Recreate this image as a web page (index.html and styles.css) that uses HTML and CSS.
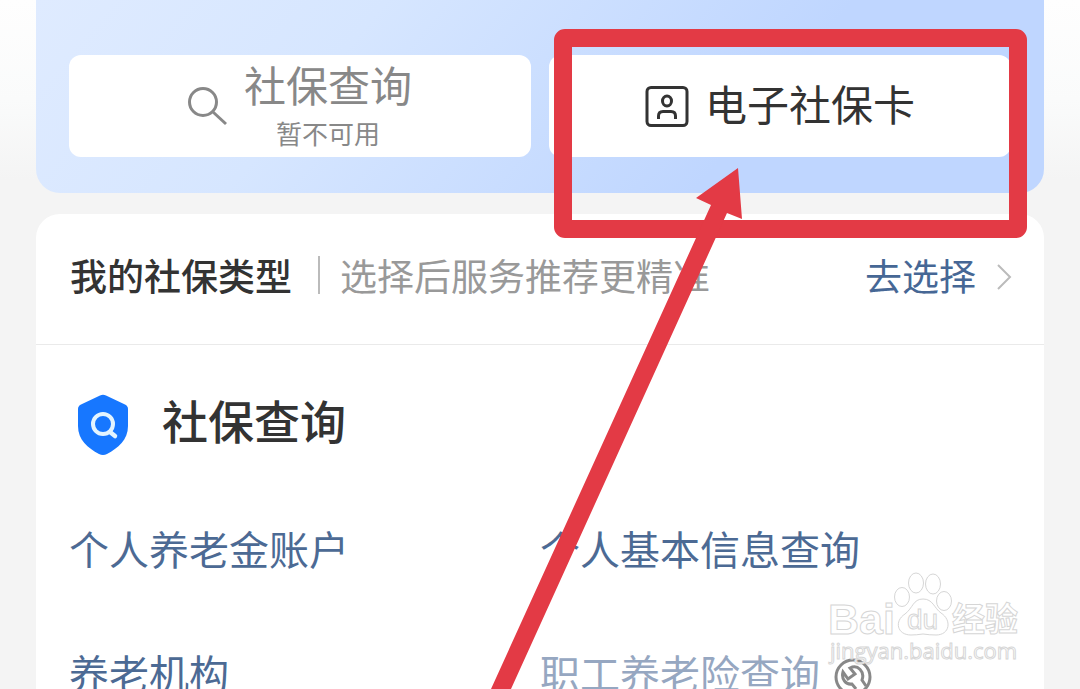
FILE: index.html
```html
<!DOCTYPE html>
<html lang="zh-CN">
<head>
    <meta charset="UTF-8">
    <meta name="viewport" content="width=device-width, initial-scale=1.0">
    <title>社保查询</title>
    <link rel="stylesheet" href="styles.css">
</head>
<body>
    <div class="page">
        <div class="hero">
            <button class="hero-btn disabled" type="button" disabled>
                <svg class="icon-search" viewBox="0 0 40 40" width="40" height="40">
                    <circle cx="15" cy="15" r="13.5"/>
                    <path d="M25 25L38 37"/>
                </svg>
                <span class="btn-text">
                    <span class="btn-title">社保查询</span>
                    <span class="btn-note">暂不可用</span>
                </span>
            </button>
            <button class="hero-btn" type="button">
                <svg class="icon-card" viewBox="0 0 44 42" width="44" height="42">
                    <rect x="2" y="1.5" width="40" height="38" rx="4"/>
                    <ellipse cx="22" cy="15" rx="4.5" ry="5"/>
                    <path d="M13.500 33V30Q13.500 25.500 18 25.500H26Q30.500 25.500 30.500 30V33"/>
                </svg>
                <span class="btn-title">电子社保卡</span>
            </button>
        </div>

        <div class="card">
            <div class="type-row">
                <strong class="type-title">我的社保类型</strong>
                <span class="type-tip">选择后服务推荐更精准</span>
                <a class="type-link" href="#">去选择
                    <svg viewBox="0 0 16 28" width="16" height="28"><path d="M2 2L14 14L2 26"/></svg>
                </a>
            </div>

            <div class="section-head">
                <svg viewBox="0 0 52 62" width="52" height="62">
                    <path fill="#1777ff" d="M23 1.500Q26 0 29 1.500L48 10.500Q51 12 51 15V32C51 46 41 54 30 60Q26 62 22 60C11 54 1 46 1 32V15Q1 12 4 10.500Z"/>
                    <circle cx="26" cy="30" r="10" fill="none" stroke="#e3f4ff" stroke-width="4"/>
                    <path d="M33 38L38 42" stroke="#e3f4ff" stroke-width="4.500" stroke-linecap="round"/>
                </svg>
                <h2>社保查询</h2>
            </div>

            <div class="links">
                <a href="#">个人养老金账户</a>
                <a href="#">个人基本信息查询</a>
                <a href="#">养老机构</a>
                <a class="muted" href="#">职工养老险查询
                    <svg viewBox="0 0 38 38" width="38" height="38">
                        <circle cx="19" cy="19" r="17"/>
                        <path d="M22 31L18 26C12 27 7 21 9 14L14 21L21 16L16 10C24 6 31 14 28 22L32 28"/>
                    </svg>
                </a>
            </div>
        </div>

        <svg class="watermark" viewBox="0 0 200 96" width="200" height="96">
            <text class="wm-brand" x="2" y="62">Bai</text>
            <ellipse cx="76" cy="25" rx="7.5" ry="9.5"/>
            <ellipse cx="90" cy="11" rx="7.5" ry="10"/>
            <ellipse cx="107" cy="12" rx="7.5" ry="10"/>
            <ellipse cx="118" cy="29" rx="7.5" ry="9.5"/>
            <path d="M97 27C107 27 108 36 115 41C126 48 124 63 110 63Q104 63 97 62Q90 63 85 63C71 63 68 49 79 42C87 36 87 27 97 27Z"/>
            <text class="wm-du" x="81" y="57">du</text>
            <text class="wm-cn" x="126" y="59">经验</text>
            <text class="wm-url" x="4" y="87">jingyan.baidu.com</text>
        </svg>

        <!-- highlight frame and arrow -->
        <svg class="marker" viewBox="0 0 1080 689">
            <rect x="563" y="38" width="455" height="191" rx="2"/>
            <path d="M738 168L696 198L711 205L491 689H511L727 213L742 219Z"/>
        </svg>
    </div>
</body>
</html>
```
FILE: styles.css
```css
* {
    box-sizing: border-box;
}
body {
    margin: 0;
    font-family: "Noto Sans CJK SC", sans-serif;
    color: #333;
    background: #f4f4f4;
}
.page {
    position: relative;
    height: 100vh;
    padding: 0 36px;
    overflow: hidden;
    background: linear-gradient(#fefefe, #fafbfb 100px, #f4f4f4 180px);
}
.hero {
    display: flex;
    gap: 18px;
    padding: 55px 33px 36px;
    border-radius: 0 0 24px 24px;
    background: linear-gradient(130deg, #dfebff, #d6e6ff 30%, #bfd6ff 70%, #bfd6ff);
}
.hero-btn {
    display: flex;
    flex: 1;
    align-items: center;
    justify-content: center;
    gap: 16px;
    height: 102px;
    padding: 0 0 6px;
    border: none;
    border-radius: 12px;
    background: #fff;
    color: #333;
    font-family: inherit;
}
.hero-btn.disabled {
    color: #888;
}
.hero-btn svg {
    margin-top: 8px;
    fill: none;
    stroke: currentColor;
    stroke-width: 3;
}
.btn-text {
    display: flex;
    flex-direction: column;
    align-items: center;
}
.btn-title {
    font-size: 42px;
    line-height: 60px;
}
.btn-note {
    font-size: 26px;
    line-height: 38px;
}
.card {
    margin-top: 21px;
    border-radius: 24px 24px 0 0;
    background: #fff;
}
.type-row {
    display: flex;
    align-items: center;
    height: 131px;
    padding: 0 32px 8px 34px;
    border-bottom: 1px solid #eaeaea;
    font-size: 37px;
    line-height: 38px;
}
.type-title {
    font-weight: 500;
}
.type-tip {
    margin-left: 26px;
    padding-left: 20px;
    border-left: 2px solid #bbb;
    color: #999;
}
.type-link {
    display: flex;
    align-items: center;
    gap: 20px;
    margin-left: auto;
    color: #466795;
    text-decoration: none;
}
.type-link svg {
    margin-top: 4px;
    fill: none;
    stroke: #bbb;
    stroke-width: 2;
}
.section-head {
    display: flex;
    align-items: center;
    gap: 33px;
    padding: 37px 41px 30px;
}
.section-head svg {
    margin-top: 12px;
}
.section-head h2 {
    margin: 0;
    font-size: 46px;
    font-weight: 500;
    line-height: 62px;
}
.links {
    display: grid;
    grid-template-columns: 1fr 1fr;
    padding: 0 33px;
}
.links a {
    display: flex;
    align-items: center;
    gap: 14px;
    height: 124px;
    color: #4c6a94;
    font-size: 40px;
    text-decoration: none;
}
.links .muted {
    color: #96a7c1;
}
.links svg {
    margin-top: 10px;
    fill: none;
    stroke: #888;
    stroke-width: 3;
}
.watermark {
    position: absolute;
    right: 54px;
    bottom: 21px;
    fill: #fff;
    stroke: #d6d6d6;
    stroke-width: 1;
}
.wm-brand {
    font: bold 43px "Liberation Sans", sans-serif;
}
.wm-du {
    font: 28px "Liberation Sans", sans-serif;
}
.wm-cn {
    font-size: 33px;
    font-weight: 700;
}
.wm-url {
    font: 22px "Open Sans", sans-serif;
}
.marker {
    position: absolute;
    top: 0;
    left: 0;
    width: 100%;
    pointer-events: none;
    fill: #e33a45;
}
.marker rect {
    fill: none;
    stroke: #e33a45;
    stroke-width: 18;
    stroke-linejoin: round;
}
```
